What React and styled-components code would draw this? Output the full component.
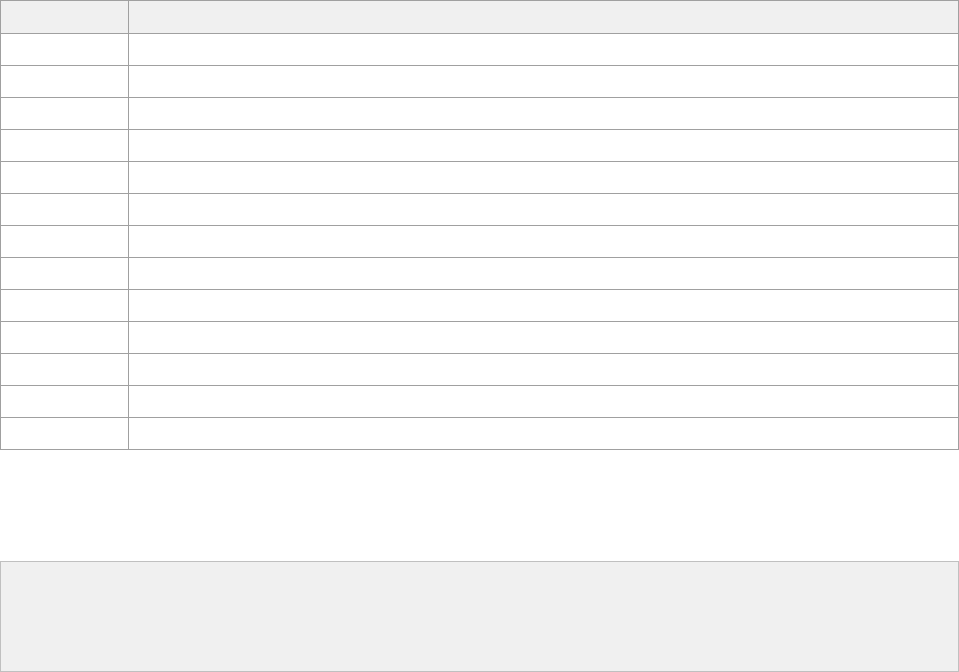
import React from "react";
import styled, { createGlobalStyle } from "styled-components";

const Global = createGlobalStyle`
  html, body { margin: 0; padding: 0; background: #ffffff; }
  body { font-family: "Liberation Sans", Arial, sans-serif; font-size: 13px; color: #333; }
`;

const Page = styled.div`
  display: flex;
  flex-direction: column;
  width: 959px;
`;

const Table = styled.table`
  width: 959px;
  border-collapse: collapse;
  table-layout: fixed;
`;

const HeadCell = styled.th`
  height: 32px;
  padding: 0;
  background: #f0f0f0;
  border: 1px solid #a0a0a0;
  width: ${(p) => (p.$narrow ? "127px" : "auto")};
`;

const Cell = styled.td`
  height: 31px;
  padding: 0;
  border: 1px solid #a0a0a0;
`;

const Footer = styled.div`
  margin-top: 111px;
  height: 109px;
  background: #f0f0f0;
  border: 1px solid #c0c0c0;
`;

const rows = Array.from({ length: 13 }, (_, i) => i);

export default function App() {
  return (
    <>
      <Global />
      <Page>
        <Table>
          <thead>
            <tr>
              <HeadCell $narrow />
              <HeadCell />
            </tr>
          </thead>
          <tbody>
            {rows.map((r) => (
              <tr key={r}>
                <Cell />
                <Cell />
              </tr>
            ))}
          </tbody>
        </Table>
        <Footer />
      </Page>
    </>
  );
}
